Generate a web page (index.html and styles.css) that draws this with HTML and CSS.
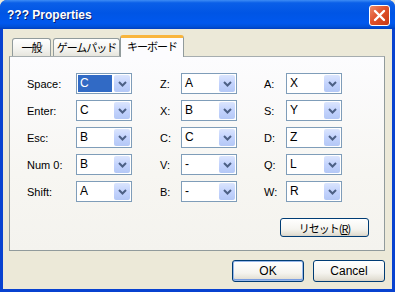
FILE: index.html
```html
<!DOCTYPE html>
<html>
<head>
    <title>??? Properties</title>
    <link rel="stylesheet" href="styles.css">
</head>
<body>
    <div class="window">
        <div class="titlebar">
            <span class="title">??? Properties</span>
            <div class="close-btn">
                <svg width="19" height="19" viewBox="0 0 19 19">
                    <line x1="5" y1="5" x2="14" y2="14" stroke="#fff" stroke-width="2.4" stroke-linecap="round"/>
                    <line x1="14" y1="5" x2="5" y2="14" stroke="#fff" stroke-width="2.4" stroke-linecap="round"/>
                </svg>
            </div>
        </div>
        <div class="client">
            <div class="tabs">
                <div class="tab tab-general">一般</div>
                <div class="tab tab-pad">ゲームパッド</div>
                <div class="tab tab-key selected">キーボード</div>
            </div>
            <div class="panel">
                <div class="key-grid">
                    <span class="key-label">Space:</span>
                    <div class="combo focused"><span class="combo-value">C</span><span class="combo-arrow"><svg width="9" height="6" viewBox="0 0 9 6"><polyline points="1,1 4.5,4.5 8,1" fill="none" stroke="#4d6185" stroke-width="2"/></svg></span></div>
                    <span class="key-label mid">Z:</span>
                    <div class="combo"><span class="combo-value">A</span><span class="combo-arrow"><svg width="9" height="6" viewBox="0 0 9 6"><polyline points="1,1 4.5,4.5 8,1" fill="none" stroke="#4d6185" stroke-width="2"/></svg></span></div>
                    <span class="key-label last">A:</span>
                    <div class="combo"><span class="combo-value">X</span><span class="combo-arrow"><svg width="9" height="6" viewBox="0 0 9 6"><polyline points="1,1 4.5,4.5 8,1" fill="none" stroke="#4d6185" stroke-width="2"/></svg></span></div>

                    <span class="key-label">Enter:</span>
                    <div class="combo"><span class="combo-value">C</span><span class="combo-arrow"><svg width="9" height="6" viewBox="0 0 9 6"><polyline points="1,1 4.5,4.5 8,1" fill="none" stroke="#4d6185" stroke-width="2"/></svg></span></div>
                    <span class="key-label mid">X:</span>
                    <div class="combo"><span class="combo-value">B</span><span class="combo-arrow"><svg width="9" height="6" viewBox="0 0 9 6"><polyline points="1,1 4.5,4.5 8,1" fill="none" stroke="#4d6185" stroke-width="2"/></svg></span></div>
                    <span class="key-label last">S:</span>
                    <div class="combo"><span class="combo-value">Y</span><span class="combo-arrow"><svg width="9" height="6" viewBox="0 0 9 6"><polyline points="1,1 4.5,4.5 8,1" fill="none" stroke="#4d6185" stroke-width="2"/></svg></span></div>

                    <span class="key-label">Esc:</span>
                    <div class="combo"><span class="combo-value">B</span><span class="combo-arrow"><svg width="9" height="6" viewBox="0 0 9 6"><polyline points="1,1 4.5,4.5 8,1" fill="none" stroke="#4d6185" stroke-width="2"/></svg></span></div>
                    <span class="key-label mid">C:</span>
                    <div class="combo"><span class="combo-value">C</span><span class="combo-arrow"><svg width="9" height="6" viewBox="0 0 9 6"><polyline points="1,1 4.5,4.5 8,1" fill="none" stroke="#4d6185" stroke-width="2"/></svg></span></div>
                    <span class="key-label last">D:</span>
                    <div class="combo"><span class="combo-value">Z</span><span class="combo-arrow"><svg width="9" height="6" viewBox="0 0 9 6"><polyline points="1,1 4.5,4.5 8,1" fill="none" stroke="#4d6185" stroke-width="2"/></svg></span></div>

                    <span class="key-label">Num 0:</span>
                    <div class="combo"><span class="combo-value">B</span><span class="combo-arrow"><svg width="9" height="6" viewBox="0 0 9 6"><polyline points="1,1 4.5,4.5 8,1" fill="none" stroke="#4d6185" stroke-width="2"/></svg></span></div>
                    <span class="key-label mid">V:</span>
                    <div class="combo"><span class="combo-value">-</span><span class="combo-arrow"><svg width="9" height="6" viewBox="0 0 9 6"><polyline points="1,1 4.5,4.5 8,1" fill="none" stroke="#4d6185" stroke-width="2"/></svg></span></div>
                    <span class="key-label last">Q:</span>
                    <div class="combo"><span class="combo-value">L</span><span class="combo-arrow"><svg width="9" height="6" viewBox="0 0 9 6"><polyline points="1,1 4.5,4.5 8,1" fill="none" stroke="#4d6185" stroke-width="2"/></svg></span></div>

                    <span class="key-label">Shift:</span>
                    <div class="combo"><span class="combo-value">A</span><span class="combo-arrow"><svg width="9" height="6" viewBox="0 0 9 6"><polyline points="1,1 4.5,4.5 8,1" fill="none" stroke="#4d6185" stroke-width="2"/></svg></span></div>
                    <span class="key-label mid">B:</span>
                    <div class="combo"><span class="combo-value">-</span><span class="combo-arrow"><svg width="9" height="6" viewBox="0 0 9 6"><polyline points="1,1 4.5,4.5 8,1" fill="none" stroke="#4d6185" stroke-width="2"/></svg></span></div>
                    <span class="key-label last">W:</span>
                    <div class="combo"><span class="combo-value">R</span><span class="combo-arrow"><svg width="9" height="6" viewBox="0 0 9 6"><polyline points="1,1 4.5,4.5 8,1" fill="none" stroke="#4d6185" stroke-width="2"/></svg></span></div>
                </div>
                <div class="panel-actions">
                    <button class="btn reset-btn">リセット(<u>R</u>)</button>
                </div>
            </div>
            <div class="dialog-actions">
                <button class="btn default">OK</button>
                <button class="btn">Cancel</button>
            </div>
        </div>
    </div>
</body>
</html>
```

FILE: styles.css
```css
body {
    margin: 0;
    padding: 0;
    font-family: "Liberation Sans", Arial, sans-serif;
    font-size: 11px;
    color: #000;
    background-color: #ece9d8;
}
.window {
    width: 395px;
    height: 292px;
    display: flex;
    flex-direction: column;
    background-color: #0842d0;
    border-radius: 7px 7px 0 0;
    overflow: hidden;
}
.titlebar {
    height: 29px;
    flex: none;
    display: flex;
    align-items: center;
    justify-content: space-between;
    padding: 0 5px 0 7px;
    background: linear-gradient(to bottom, #3d8cf5 0%, #0a5fe8 10%, #0055e5 45%, #0058ee 80%, #0050d8 92%, #003fc0 100%);
}
.title {
    color: #fff;
    font-weight: bold;
    font-size: 12px;
    text-shadow: 1px 1px 0 #0a1f70;
    margin-top: 1px;
}
.close-btn {
    width: 19px;
    height: 19px;
    border: 1px solid #fff;
    border-radius: 3px;
    background: linear-gradient(135deg, #ee8a6a 0%, #e0522c 45%, #c83812 100%);
    display: flex;
    margin-top: 1px;
}
.client {
    flex: 1;
    display: flex;
    flex-direction: column;
    margin: 0 3px 3px 3px;
    padding: 6px 7px 7px 6px;
    background-color: #ece9d8;
}
.tabs {
    height: 21px;
    display: flex;
    align-items: flex-end;
    position: relative;
    z-index: 1;
}
.tab {
    box-sizing: border-box;
    height: 18px;
    border: 1px solid #919b9c;
    border-bottom: none;
    border-radius: 3px 3px 0 0;
    background: linear-gradient(to bottom, #fff 0%, #f3f3ef 60%, #e6e5dd 100%);
    font-family: "Noto Sans CJK JP", sans-serif;
    font-size: 11px;
    letter-spacing: -1px;
    line-height: 16px;
    text-align: center;
}
.tab-general {
    width: 39px;
    margin-left: 3px;
}
.tab-pad {
    width: 67px;
    margin-left: 2px;
}
.tab-key {
    width: 64px;
}
.tab.selected {
    height: 22px;
    margin-bottom: -1px;
    background: #fcfcfe;
    border-top: 3px solid #f9b53c;
    line-height: 17px;
}
.panel {
    height: 195px;
    box-sizing: border-box;
    border: 1px solid #919b9c;
    border-top-color: #a6adaf;
    padding: 16px 15px 0 17px;
    background: linear-gradient(to bottom, #fcfcfe 0%, #f7f6f2 60%, #f4f3ee 100%);
}
.key-grid {
    display: grid;
    grid-template-columns: 49px 56px 49px 56px 49px 56px;
    grid-auto-rows: 21px;
    row-gap: 6px;
    align-items: center;
}
.key-label.mid {
    padding-left: 28px;
}
.key-label.last {
    padding-left: 27px;
}
.combo {
    box-sizing: border-box;
    height: 21px;
    border: 1px solid #7f9db9;
    background-color: #fff;
    display: flex;
    padding: 1px;
}
.combo-value {
    flex: 1;
    margin-right: 2px;
    padding-left: 2px;
    font-size: 12px;
    line-height: 17px;
}
.combo.focused .combo-value {
    background-color: #316ac5;
    color: #fff;
}
.combo-arrow {
    width: 16px;
    border-radius: 2px;
    background: linear-gradient(to bottom, #dbe5fd 0%, #c3d3fd 50%, #b4c8f6 100%);
    display: flex;
    align-items: center;
    justify-content: center;
}
.panel-actions {
    display: flex;
    justify-content: flex-end;
    margin-top: 16px;
}
.btn {
    box-sizing: border-box;
    border: 1px solid #003c74;
    border-radius: 3px;
    background: linear-gradient(to bottom, #fff 0%, #f5f4ef 60%, #e3e0d5 90%, #d6d0c5 100%);
    font-family: "Liberation Sans", Arial, sans-serif;
    font-size: 11px;
    color: #000;
    padding: 0;
}
.reset-btn {
    width: 89px;
    height: 19px;
    font-family: "Noto Sans CJK JP", sans-serif;
    letter-spacing: -1px;
}
.dialog-actions {
    display: flex;
    justify-content: flex-end;
    gap: 9px;
    margin-top: 9px;
}
.dialog-actions .btn {
    width: 72px;
    height: 22px;
    font-size: 12px;
}
.btn.default {
    box-shadow: inset 0 0 0 1px #98b8ea, inset 0 -1px 0 1px #7a9de0;
}
```
